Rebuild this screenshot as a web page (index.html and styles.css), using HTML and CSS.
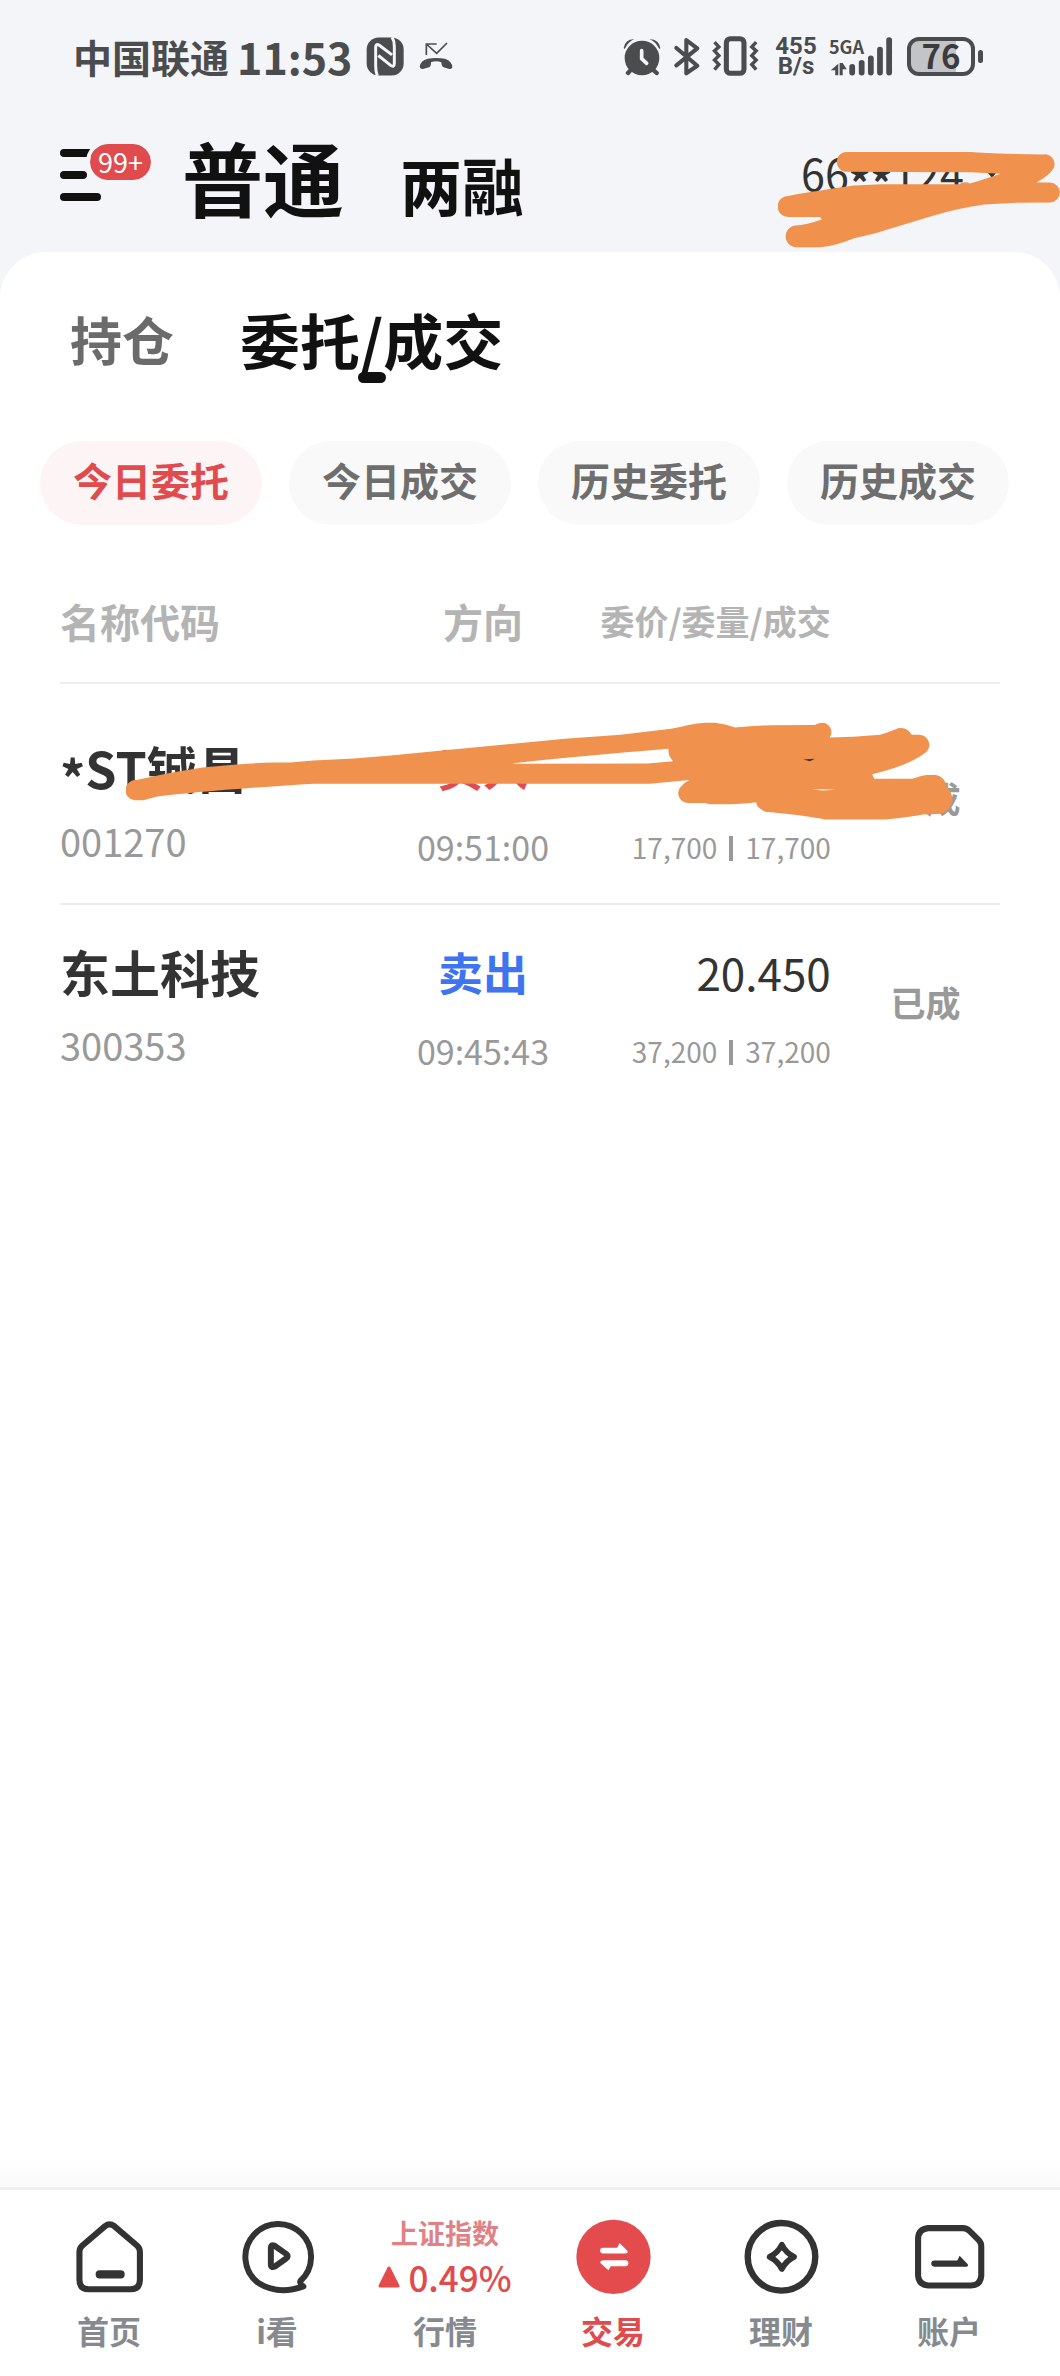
FILE: index.html
```html
<!DOCTYPE html>
<html lang="zh-CN">
<head>
  <meta charset="UTF-8" />
  <title>今日委托</title>
  <meta name="viewport" content="width=device-width, initial-scale=1" />
  <link rel="stylesheet" href="styles.css">
</head>
<body>
  <div class="status-bar">
    <div class="status-left">
      <span>中国联通</span>
      <span class="clock">11:53</span>
      <svg class="nfc" viewBox="1080 114 114 116">
        <rect x="1082" y="115" width="111" height="114" rx="36" fill="#4a4c4e"/>
        <path fill="none" stroke="#f4f5f9" stroke-width="9" d="M1114 230Q1109 218 1109 200V144Q1109 131 1121 139L1158 167M1158 114Q1165 124 1165 142V192Q1165 207 1153 198L1117 169"/>
      </svg>
      <svg class="missed" viewBox="1238 132 102 84">
        <path fill="none" stroke="#4a4c4e" stroke-width="5" d="M1260 171V138H1291M1260 138L1291 166L1322 135"/>
        <path fill="#4a4c4e" d="M1240 206Q1242 188 1264 182Q1290 178 1316 182Q1338 190 1338 208Q1336 215 1326 212L1312 208Q1306 206 1305 193Q1290 186 1274 193Q1274 206 1268 208L1250 213Q1242 214 1240 206Z"/>
      </svg>
    </div>
    <div class="status-right">
      <svg class="alarm" viewBox="273 115 114 115">
        <circle cx="330" cy="177" r="52" fill="#4a4c4e"/>
        <path fill="#4a4c4e" d="M275 147Q280 120 307 121Q290 127 278 150ZM385 147Q380 120 352 121Q370 127 382 150Z"/>
        <path stroke="#4a4c4e" stroke-width="13" stroke-linecap="round" d="M298 211L288 222M362 211L374 222"/>
        <path fill="none" stroke="#f4f5f9" stroke-width="11" stroke-linecap="round" d="M329 155V179L344 193"/>
      </svg>
      <svg class="bluetooth" viewBox="426 116 76 114">
        <path fill="none" stroke="#4a4c4e" stroke-width="12" stroke-linejoin="round" stroke-linecap="round" d="M433 148L494 200L462 222V125L494 149L433 199"/>
      </svg>
      <svg class="vibrate" viewBox="538 113 138 118">
        <rect x="580" y="121" width="52" height="102" rx="12" fill="none" stroke="#4a4c4e" stroke-width="15"/>
        <path fill="none" stroke="#4a4c4e" stroke-width="10" d="M545 131L558 145L545 157L558 171L545 184L558 197L545 212M668 131L655 145L668 157L655 171L668 184L655 197L668 212"/>
      </svg>
      <div class="net-speed"><span>455</span><span>B/s</span></div>
      <div class="signal">
        <span>5GA</span>
        <svg viewBox="886 115 188 115">
          <path stroke="#4a4c4e" stroke-width="17" stroke-linecap="round" d="M954 203V220M982 191V220M1009 178V220M1036 152V220M1063 124V220"/>
          <path fill="#4a4c4e" d="M913 194V228H904V213H891ZM917 192H926L938 210H926V228H917Z"/>
        </svg>
      </div>
      <div class="battery"><span>76</span></div>
    </div>
  </div>

  <header class="header">
    <button class="menu-btn" aria-label="菜单">
      <i class="bar"></i><i class="bar"></i><i class="bar"></i>
      <span class="badge">99+</span>
    </button>
    <button class="mode mode-active">普通</button>
    <button class="mode">两融</button>
    <button class="account"><span>66<b class="star">**</b>124</span><i class="caret"></i></button>
    <svg class="header-mark" viewBox="735 450 833 287">
      <path fill="#f0924e" d="M940 453L1305 453Q1400 460 1522 460A28 28 0 0 1 1552 490Q1550 515 1498 543L1538 543A29 29 0 0 1 1538 602L1440 603L1345 608Q1270 618 1190 642L1020 694L960 708Q900 732 860 734L795 734A31 31 0 0 1 785 670Q820 668 864 652L860 645L765 645A31 31 0 0 1 765 583Q800 575 960 552L1040 548L1270 548Q1285 538 1302 546Q1340 535 1393 517L1305 513L935 511A29 29 0 0 1 940 453Z"/>
    </svg>
  </header>

  <main class="sheet">
    <nav class="tabs">
      <a href="#" class="tab">持仓</a>
      <a href="#" class="tab tab-active">委托/成交</a>
    </nav>

    <div class="chips">
      <button class="chip chip-active">今日委托</button>
      <button class="chip">今日成交</button>
      <button class="chip">历史委托</button>
      <button class="chip">历史成交</button>
    </div>

    <div class="orders">
      <table>
        <thead>
          <tr>
            <th class="col-name">名称代码</th>
            <th class="col-side">方向</th>
            <th class="col-price">委价/委量/成交</th>
            <th class="col-state"></th>
          </tr>
        </thead>
        <tbody>
          <tr>
            <td class="col-name"><div class="name"><span class="star">*</span>ST铖昌</div><div class="code">001270</div></td>
            <td class="col-side"><div class="side buy">买入</div><div class="time">09:51:00</div></td>
            <td class="col-price"><div class="price">&nbsp;</div><div class="volume">17,700<i class="sep"></i>17,700</div></td>
            <td class="col-state">已成</td>
          </tr>
          <tr>
            <td class="col-name"><div class="name">东土科技</div><div class="code">300353</div></td>
            <td class="col-side"><div class="side sell">卖出</div><div class="time">09:45:43</div></td>
            <td class="col-price"><div class="price">20.450</div><div class="volume">37,200<i class="sep"></i>37,200</div></td>
            <td class="col-state">已成</td>
          </tr>
        </tbody>
      </table>
      <svg class="row-mark" viewBox="374 490 2452 292">
        <path fill="#f0924e" fill-rule="evenodd" d="M405 662Q500 640 600 625Q720 613 810 610L860 610L930 604L1050 598L1150 590L1568 550L1675 540L1840 528L1990 510Q2070 492 2090 492L2120 492Q2150 496 2180 506Q2240 500 2290 500L2415 499Q2430 492 2440 492A28 28 0 0 1 2460 536L2530 534L2610 528Q2650 515 2665 508Q2690 504 2703 528L2722 528A30 30 0 0 1 2738 585Q2690 620 2586 645L2592 658L2705 658Q2735 648 2750 647L2775 647Q2800 650 2808 685Q2825 700 2824 725Q2815 755 2790 762L2735 764Q2650 779 2610 779L2445 779Q2400 768 2270 756Q2243 745 2242 728Q2190 734 2150 734L2105 734L2090 730L2040 730A29 29 0 0 1 2016 685Q2030 668 2044 662Q1980 668 1925 673L930 673L890 675Q600 695 470 710L425 722L400 722A30 30 0 0 1 405 662Z
        M1523 612Q1700 592 1982 569Q1980 590 1996 606L1920 613L1523 614Z
        M2408 690Q2440 688 2478 691L2440 693Z"/>
        <path fill="#333" d="M2382 601L2416 599Q2405 605 2402 606Z"/>
      </svg>
    </div>
  </main>

  <nav class="tab-bar">
    <a href="#" class="item">
      <svg viewBox="214 149 222 222" fill="none" stroke="#333">
        <path stroke-width="18" stroke-linejoin="round" d="M312 170Q325 160 339 170L407 228Q415 235 415 246V329Q415 357 387 357H264Q236 357 236 329V246Q236 235 244 228Z"/>
        <path stroke-width="24" stroke-linecap="round" d="M296 313H358"/>
      </svg>
      <span>首页</span>
    </a>
    <a href="#" class="item">
      <svg viewBox="709 149 222 226" fill="none" stroke="#333" stroke-linejoin="round">
        <path stroke-width="18" d="M889 336A99 99 0 1 0 760 340Q820 380 898 352Q886 344 889 336Z"/>
        <path stroke-width="18" d="M800 236Q800 225 810 229L846 254Q855 261 846 268L812 292Q800 297 800 286Z"/>
      </svg>
      <span>i看</span>
    </a>
    <a href="#" class="item">
      <div class="market">
        <small>上证指数</small>
        <strong>
          <svg class="up" viewBox="0 0 22 22"><path fill="#e34b4d" stroke="#e34b4d" stroke-width="3" stroke-linejoin="round" d="M11 2L20 20H2Z"/></svg>0.49%
        </strong>
      </div>
      <span>行情</span>
    </a>
    <a href="#" class="item item-active">
      <svg viewBox="134 149 222 222">
        <circle cx="245" cy="261" r="110" fill="#e34b4d"/>
        <path fill="#fff" d="M214 234H256L263 220L286 243Q290 251 280 251H214A8 8 0 0 1 214 234ZM280 271H214Q203 273 207 280L230 301L237 289H280A8 8 0 0 0 280 271Z"/>
      </svg>
      <span>交易</span>
    </a>
    <a href="#" class="item">
      <svg viewBox="631 149 222 222" fill="none" stroke="#333">
        <circle cx="742" cy="261" r="100" stroke-width="19"/>
        <path stroke-width="17" stroke-linejoin="round" d="M743 225Q754 248 779 261Q754 274 743 297Q732 274 707 261Q732 248 743 225Z"/>
      </svg>
      <span>理财</span>
    </a>
    <a href="#" class="item">
      <svg viewBox="1128 149 222 222" fill="none" stroke="#333">
        <path stroke-width="18" stroke-linejoin="round" d="M1176 176H1279Q1290 176 1298 184L1325 211Q1333 219 1333 230V317Q1331 345 1303 346H1176Q1148 344 1146 317V206Q1148 178 1176 176Z"/>
        <path fill="#333" stroke="none" d="M1194 272H1262L1269 258L1293 283Q1296 290 1288 290H1194A9 9 0 0 1 1194 272Z"/>
      </svg>
      <span>账户</span>
    </a>
  </nav>
</body>
</html>
```
FILE: styles.css
```css
:root {
  --red: #e04b4d;
  --blue: #3f74f0;
  --ink: #111;
  --dark: #333;
  --grey: #999;
  --status: #4a4c4e;
  --page: #f4f5f9;
}

* {
  box-sizing: border-box;
}

body {
  margin: 0;
  min-height: 100vh;
  display: flex;
  flex-direction: column;
  background: var(--page);
  color: var(--ink);
  font-family: "Noto Sans CJK SC", sans-serif;
}

button {
  border: none;
  padding: 0;
  background: none;
  color: inherit;
  font-family: inherit;
  cursor: pointer;
}

a {
  color: inherit;
  text-decoration: none;
}

svg {
  display: block;
}

/* Phone status bar */
.status-bar {
  display: flex;
  justify-content: space-between;
  padding: 36px 85px 0 73px;
  color: var(--status);
  font-size: 39px;
  font-weight: bold;
  line-height: 40px;
}

.status-left,
.status-right {
  display: flex;
  align-items: center;
}

.clock {
  margin: 0 14px 0 8px;
  font-size: 43px;
}

.nfc {
  width: 38px;
  height: 39px;
}

.missed {
  width: 34px;
  height: 28px;
  margin-left: 15px;
}

.alarm {
  width: 38px;
  height: 39px;
}

.bluetooth {
  width: 26px;
  height: 39px;
  margin-left: 13px;
}

.vibrate {
  width: 47px;
  height: 40px;
  margin-left: 12px;
}

.net-speed {
  width: 46px;
  margin-left: 14px;
  display: flex;
  flex-direction: column;
  align-items: center;
  font-family: Roboto, sans-serif;
  font-size: 24px;
  line-height: 20px;
}

.signal {
  position: relative;
  margin-left: 10px;
}

.signal span {
  position: absolute;
  top: 0;
  left: 0;
  font-size: 18px;
  line-height: 18px;
}

.signal svg {
  width: 64px;
  height: 39px;
}

.battery {
  position: relative;
  width: 68px;
  height: 39px;
  margin-left: 14px;
  border: 4px solid var(--status);
  border-radius: 12px;
  background: linear-gradient(to right, #c3c4c8 75%, transparent 75%);
  color: #3a3b3d;
  font-size: 33px;
  line-height: 28px;
  text-align: center;
}

.battery::after {
  content: "";
  position: absolute;
  top: 9px;
  right: -12px;
  width: 5px;
  height: 13px;
  border-radius: 3px;
  background: var(--status);
}

/* Header */
.header {
  position: relative;
  display: flex;
  align-items: baseline;
  padding: 59px 60px 27px;
}

.menu-btn {
  position: relative;
  align-self: flex-start;
  width: 91px;
  height: 52px;
  margin-top: 14px;
  display: flex;
  flex-direction: column;
  justify-content: space-between;
}

.bar {
  width: 41px;
  height: 8px;
  border-radius: 4px;
  background: var(--ink);
}

.bar:nth-child(2) {
  width: 27px;
}

.badge {
  position: absolute;
  top: -9px;
  right: -4px;
  padding: 0 8px;
  border: 4px solid var(--page);
  border-radius: 24px;
  background: var(--red);
  background-clip: padding-box;
  color: #fff;
  font-size: 27px;
  line-height: 36px;
}

.mode {
  margin-left: 56px;
  font-size: 62px;
  font-weight: bold;
  line-height: 82px;
}

.mode-active {
  margin-left: 31px;
  font-size: 81px;
}

.account {
  margin-left: auto;
  color: var(--dark);
  font-size: 43px;
  line-height: 60px;
  display: flex;
  align-items: center;
  align-self: flex-start;
  margin-top: 7px;
}

.star {
  vertical-align: -9px;
  line-height: 1;
}

.caret {
  margin-left: 20px;
  border: 8px solid transparent;
  border-top: 10px solid var(--dark);
  border-bottom: 0;
}

.header-mark {
  position: absolute;
  right: 0;
  top: 75px;
  width: 282px;
}

/* Sheet */
.sheet {
  flex: 1;
  padding-top: 57px;
  border-radius: 46px 46px 0 0;
  background: linear-gradient(to top, #fafafa, #fff 30px);
}

.tabs {
  display: flex;
  align-items: center;
  gap: 66px;
  padding: 0 70px;
}

.tab {
  color: #6b6b6b;
  font-size: 52px;
  font-weight: bold;
  line-height: 60px;
}

.tab-active {
  position: relative;
  color: var(--ink);
  font-size: 60px;
}

.tab-active::after {
  content: "";
  position: absolute;
  bottom: -14px;
  left: calc(50% - 14px);
  width: 28px;
  height: 11px;
  border-radius: 6px;
  background: var(--ink);
}

.chips {
  display: flex;
  gap: 27px;
  margin-top: 72px;
  padding: 0 51px 0 40px;
}

.chip {
  flex: 1;
  border-radius: 42px;
  background: #f9f9f9;
  color: #6e6e6e;
  font-size: 39px;
  font-weight: bold;
  line-height: 76px;
  padding-bottom: 8px;
}

.chip-active {
  background: #fdf5f5;
  color: var(--red);
}

/* Orders */
.orders {
  position: relative;
  margin: 0 60px;
}

.orders table {
  width: 100%;
  table-layout: fixed;
  border-collapse: separate;
  border-spacing: 0;
}

.orders th {
  padding: 76px 0 41px;
  border-bottom: 2px solid #ededed;
  color: #b4b4b4;
  font-size: 40px;
  line-height: 40px;
}

.orders td {
  padding: 38px 0 36px;
  color: var(--grey);
}

.orders tbody tr:first-child td {
  padding-top: 55px;
  border-bottom: 2px solid #ededed;
}

.orders .col-name {
  width: 34%;
  text-align: left;
}

.orders .col-side {
  width: 22%;
  text-align: center;
}

.orders .col-price {
  width: 26%;
  text-align: right;
}

.orders th.col-price {
  font-size: 34px;
}

.orders td.col-state {
  padding-left: 20px;
  padding-bottom: 47px;
  font-size: 35px;
  font-weight: bold;
  line-height: 40px;
  text-align: center;
}

.name,
.side,
.price {
  height: 56px;
  line-height: 56px;
}

.name {
  color: var(--dark);
  font-size: 50px;
  font-weight: bold;
}

.side {
  font-size: 45px;
  font-weight: bold;
}

.buy {
  color: var(--red);
}

.sell {
  color: var(--blue);
}

.price {
  color: var(--dark);
  font-size: 44px;
}

.code {
  margin: 26px 0 6px;
  font-size: 38px;
  line-height: 40px;
}

.time,
.volume {
  margin-top: 31px;
  line-height: 40px;
}

.time {
  font-size: 34px;
}

.volume {
  font-size: 28px;
}

.sep {
  display: inline-block;
  width: 4px;
  height: 25px;
  margin: 0 12px;
  background: var(--grey);
  vertical-align: -2px;
}

.row-mark {
  position: absolute;
  top: 197px;
  left: 7%;
  width: 88%;
}

/* Bottom tab bar */
.tab-bar {
  display: flex;
  padding: 29px 27px 28px 25px;
  border-top: 3px solid #efefef;
  background: #fff;
}

.item {
  flex: 1;
  display: flex;
  flex-direction: column;
  align-items: center;
  gap: 18px;
  color: #868a8f;
  font-size: 32px;
  font-weight: bold;
  line-height: 36px;
}

.item > svg {
  width: 75px;
  height: 75px;
}

.item-active {
  color: var(--red);
}

.market {
  height: 75px;
  color: var(--red);
}

.market small,
.market strong {
  display: flex;
  align-items: center;
  justify-content: center;
}

.market small {
  color: #e08285;
  font-size: 27px;
  line-height: 28px;
}

.market strong {
  gap: 8px;
  font-size: 35px;
  font-weight: 500;
  line-height: 60px;
}

.up {
  width: 22px;
  height: 22px;
}
```
